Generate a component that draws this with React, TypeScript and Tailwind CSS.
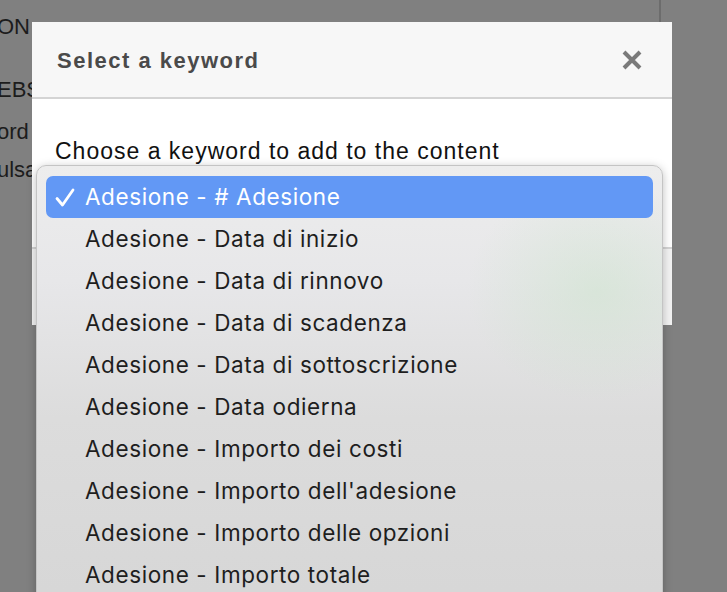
import React from "react";

const items = [
  "Adesione - # Adesione",
  "Adesione - Data di inizio",
  "Adesione - Data di rinnovo",
  "Adesione - Data di scadenza",
  "Adesione - Data di sottoscrizione",
  "Adesione - Data odierna",
  "Adesione - Importo dei costi",
  "Adesione - Importo dell'adesione",
  "Adesione - Importo delle opzioni",
  "Adesione - Importo totale",
  "Adesione - Modalità di pagamento",
];

export default function App() {
  return (
    <div className="relative w-[727px] h-[592px] overflow-hidden bg-[#808080] font-['Liberation_Sans',Arial,sans-serif]">
      {/* background page (dimmed) */}
      <div className="flex h-full">
        <div className="flex flex-col w-[662px] text-[22px] text-[#1c1c1c] leading-none -ml-[3px] pt-[16px]">
          <div className="h-[63px]">ON</div>
          <div className="h-[42px]">EBS</div>
          <div className="h-[38px]">ord</div>
          <div>ulsa</div>
        </div>
        <div className="w-[2px] h-full bg-[#6c6c6c]" />
      </div>

      {/* modal dialog */}
      <div className="absolute left-[32px] top-[22px] w-[640px] h-[303px] flex flex-col bg-white">
        <div className="h-[77px] shrink-0 flex items-center justify-between pl-[25px] pr-[29px] bg-[#f7f7f7] border-b-2 border-[#d4d4d4]">
          <span className="text-[22px] font-bold text-[#4a4a4a] tracking-[1.5px] pt-[1px]">
            Select a keyword
          </span>
          <svg width="22" height="22" viewBox="0 0 22 22" className="mt-[1px]">
            <path d="M3 3 L19 19 M19 3 L3 19" stroke="#7a7a7a" strokeWidth="4" strokeLinecap="butt" />
          </svg>
        </div>
        <div className="h-[150px] shrink-0 pl-[23px] pt-[35px] border-b-2 border-[#d4d4d4]">
          <span className="text-[23px] text-[#111] tracking-[1px]">Choose a keyword to add to the content</span>
        </div>
        <div className="flex-1 bg-[#f3f3f3]" />
      </div>

      {/* dropdown menu */}
      <div className="absolute left-[36px] top-[165px] w-[627px] h-[460px] rounded-t-[10px] border border-[#c4c4c4] shadow-[0_2px_10px_rgba(0,0,0,0.25)] overflow-hidden bg-[linear-gradient(180deg,#ededed_0%,#e7e7e9_25%,#dcdcdc_55%,#d6d6d6_100%)]">
        <div className="absolute inset-0 bg-[radial-gradient(ellipse_130px_110px_at_560px_125px,rgba(205,228,205,0.55),rgba(205,228,205,0)_100%)]" />
        <div className="relative flex flex-col px-[9px] pt-[10px] font-['Inter','Noto_Sans',sans-serif] text-[22.5px] tracking-[0.6px]">
          {items.map((t, i) =>
            i === 0 ? (
              <div key={t} className="h-[42px] flex items-center rounded-[7px] bg-[#6298f5] text-white">
                <svg width="20" height="20" viewBox="0 0 20 20" className="ml-[9px] mr-[10px] mt-[2px]">
                  <path d="M2 10.5 L7.5 17 L18 2" fill="none" stroke="white" strokeWidth="2.8" strokeLinecap="round" strokeLinejoin="round" />
                </svg>
                <span>{t}</span>
              </div>
            ) : (
              <div key={t} className="h-[42px] flex items-center pl-[39px] text-[#1e1e1e]">
                {t}
              </div>
            )
          )}
        </div>
      </div>
    </div>
  );
}
